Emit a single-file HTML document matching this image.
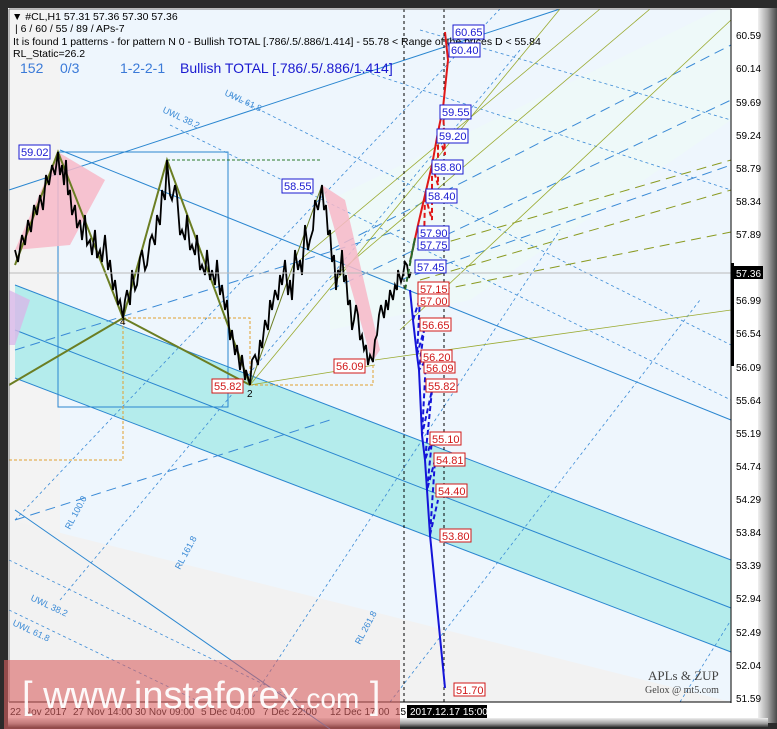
<!DOCTYPE html>
<html><head><meta charset="utf-8"><style>
html,body{margin:0;padding:0;background:#2b2b2b;}
svg{display:block;font-family:"Liberation Sans",sans-serif;}
.ax{font-size:10px;fill:#000;}
.bl{font-size:11px;fill:#1a1ad0;}
.rd{font-size:11px;fill:#d01818;}
</style></head><body>
<svg width="777" height="729" viewBox="0 0 777 729" xmlns="http://www.w3.org/2000/svg">
<defs>
<linearGradient id="bz" x1="0" x2="1"><stop offset="0" stop-color="#f0f0f0"/><stop offset="0.5" stop-color="#a8a8a8"/><stop offset="1" stop-color="#4a4a4a"/></linearGradient>
<linearGradient id="bb" x1="0" y1="0" x2="0" y2="1"><stop offset="0" stop-color="#eeeeee"/><stop offset="0.6" stop-color="#a0a0a0"/><stop offset="1" stop-color="#3a3a3a"/></linearGradient>
</defs>
<rect width="777" height="729" fill="#2b2b2b"/>
<rect x="8" y="8" width="752" height="712" fill="#ffffff"/>
<rect x="758" y="8" width="19" height="715" fill="url(#bz)"/>
<rect x="8" y="718" width="760" height="9" fill="url(#bb)"/>
<rect x="9" y="9" width="722" height="693" fill="#f3f3f3"/>
<polygon points="60,9 731,9 731,702 60,702" fill="#eef6fd"/>
<polygon points="9,520 731,702 9,702" fill="#f2f2f2"/>
<polygon points="330,200 720,9 731,9 731,120 470,300 330,330" fill="#eefaf8" opacity="0.8"/>
<polygon points="15,285 731,560 731,652 15,378" fill="#b4ecec"/>
<line x1="15" y1="285" x2="731" y2="560" stroke="#2a86d0" stroke-width="1"/>
<line x1="15" y1="330" x2="731" y2="608" stroke="#2a86d0" stroke-width="1"/>
<line x1="15" y1="378" x2="731" y2="652" stroke="#2a86d0" stroke-width="1"/>
<line x1="60" y1="150" x2="731" y2="420" stroke="#2a86d0" stroke-width="1"/>
<line x1="15" y1="510" x2="330" y2="729" stroke="#2a86d0" stroke-width="1"/>
<line x1="9" y1="190" x2="560" y2="9" stroke="#2a86d0" stroke-width="1"/>
<g stroke="#3a8ad6" stroke-width="0.8" stroke-dasharray="3,3" fill="none">
<line x1="230" y1="95" x2="731" y2="345"/><line x1="170" y1="125" x2="731" y2="400"/>
<line x1="360" y1="70" x2="731" y2="190"/><line x1="420" y1="30" x2="731" y2="120"/>
<line x1="15" y1="520" x2="500" y2="9"/><line x1="60" y1="600" x2="520" y2="50"/>
<line x1="250" y1="702" x2="560" y2="230"/><line x1="390" y1="702" x2="700" y2="300"/>
<line x1="680" y1="702" x2="731" y2="620"/><line x1="9" y1="610" x2="200" y2="702"/>
<line x1="9" y1="560" x2="300" y2="702"/>
</g>
<g stroke="#3a8ad6" stroke-width="1" stroke-dasharray="10,6" fill="none">
<line x1="330" y1="250" x2="731" y2="45"/><line x1="330" y1="290" x2="731" y2="100"/>
<line x1="400" y1="280" x2="731" y2="165"/><line x1="15" y1="350" x2="400" y2="230"/>
<line x1="15" y1="520" x2="330" y2="420"/>
</g>
<g stroke="#8a9a20" stroke-width="1" stroke-dasharray="10,6" fill="none">
<line x1="420" y1="250" x2="731" y2="160"/><line x1="420" y1="280" x2="731" y2="190"/>
<line x1="440" y1="290" x2="731" y2="232"/>
</g>
<g stroke="#9aaa30" stroke-width="0.8" fill="none">
<line x1="300" y1="260" x2="600" y2="9"/><line x1="330" y1="280" x2="650" y2="9"/>
<line x1="400" y1="330" x2="731" y2="20"/><line x1="250" y1="385" x2="560" y2="9"/>
<line x1="375" y1="360" x2="731" y2="310"/><line x1="250" y1="385" x2="375" y2="365"/>
</g>
<rect x="58" y="152" width="170" height="255" fill="none" stroke="#2a86d0"/>
<polyline points="123,318 250,318 250,385" fill="none" stroke="#e0a030" stroke-dasharray="3,2"/>
<polyline points="9,460 123,460 123,318" fill="none" stroke="#e0a030" stroke-dasharray="3,2"/>
<polyline points="167,160 322,160" fill="none" stroke="#2a7a2a" stroke-dasharray="3,2"/>
<polyline points="250,385 373,385 373,365" fill="none" stroke="#e0a030" stroke-dasharray="3,2"/>
<polygon points="15,250 58,152 105,180 70,245" fill="#f7b8c8" opacity="0.85"/>
<polygon points="322,185 345,200 380,350 372,362" fill="#f7b8c8" opacity="0.85"/>
<polygon points="9,290 30,300 15,345 9,345" fill="#d8b8e8" opacity="0.8"/>
<polyline points="15,265 58,152 123,318 167,160 250,385" fill="none" stroke="#6b7e23" stroke-width="2"/>
<polyline points="9,385 123,318 250,385" fill="none" stroke="#6b7e23" stroke-width="2"/>
<polyline points="250,385 322,185" fill="none" stroke="#6b7e23" stroke-width="1"/>
<polyline points="15,250 18,262 22,235 25,245 28,220 31,232 34,205 37,215 40,195 43,210 46,175 49,185 52,165 55,175 58,152 60,175 62,165 64,185 66,160 68,195 70,190 72,215 75,205 77,228 80,220 82,240 85,215 87,245 90,240 92,255 95,230 97,258 100,250 102,262 105,235 108,270 110,260 113,290 115,280 118,305 120,300 123,318 125,300 127,290 130,305 132,270 135,290 137,285 140,258 142,250 145,270 147,265 150,240 152,235 155,245 157,215 160,225 162,190 165,200 167,160 170,195 172,200 175,185 177,195 180,235 182,230 185,240 187,215 190,250 192,245 195,255 197,235 200,270 202,265 205,275 207,250 210,280 212,270 215,285 217,260 220,295 222,285 225,310 227,300 230,340 232,330 235,355 237,345 240,370 242,355 245,380 246,370 250,385 252,360 255,355 258,365 260,340 262,348 265,320 268,330 270,300 272,310 275,290 278,300 280,275 282,285 285,260 288,295 290,280 292,300 295,250 298,270 300,260 302,275 305,225 308,250 310,240 313,230 315,200 318,210 322,185 324,210 326,205 328,235 330,230 332,262 334,255 336,290 338,270 340,275 342,250 344,282 346,275 348,305 350,300 352,330 354,320 356,305 358,315 360,340 362,335 364,350 366,345 368,365 370,355 373,362 375,340 377,335 379,315 381,305 384,318 386,300 388,310 390,290 393,300 395,285 397,290 398,270 401,282 403,275 405,262 407,265 409,278 411,272" fill="none" stroke="#000" stroke-width="1.8"/>
<line x1="404" y1="9" x2="404" y2="702" stroke="#000" stroke-dasharray="3,3"/>
<line x1="444" y1="9" x2="444" y2="702" stroke="#000" stroke-dasharray="3,3"/>
<line x1="9" y1="273" x2="731" y2="273" stroke="#bbbbbb"/>
<polyline points="410,262 418,225 425,195 432,165 438,132 443,108 448,60 445,32" fill="none" stroke="#e01818" stroke-width="2"/>
<polyline points="418,225 424,245 425,195 432,220 432,165 438,185 438,132 445,155 443,108" fill="none" stroke="#e01818" stroke-width="2" stroke-dasharray="5,3"/>
<polyline points="410,290 413,320 417,355 419,370 422,435 425,460 427,490 430,535 445,688" fill="none" stroke="#1414d8" stroke-width="2"/>
<polyline points="413,320 420,298 417,355 424,330 419,370 426,360 422,435 432,390 425,460 432,440 427,490 435,460 430,535 438,500" fill="none" stroke="#1414d8" stroke-width="2" stroke-dasharray="5,3"/>
<polyline points="410,262 415,238 405,290" fill="none" stroke="#2a6a2a" stroke-width="2" stroke-dasharray="5,3"/>
<g font-size="10.5" fill="#000">
<text x="12" y="20">▼ #CL,H1  57.31 57.36 57.30 57.36</text>
<text x="15" y="32">| 6 / 60 / 55 / 89 / APs-7</text>
<text x="13" y="45">It is found 1 patterns  -  for pattern N 0 - Bullish TOTAL [.786/.5/.886/1.414] - 55.78 &lt; Range of the prices D &lt; 55.84</text>
<text x="13" y="57">RL_Static=26.2</text>
</g>
<g font-size="14" fill="#3a7ad8"><text x="20" y="73">152</text><text x="60" y="73">0/3</text><text x="120" y="73">1-2-2-1</text></g>
<text x="180" y="73" font-size="14" fill="#1a1ad0">Bullish TOTAL [.786/.5/.886/1.414]</text>
<g font-size="9" fill="#3a8ad6">
<text x="224" y="95" transform="rotate(25 224 95)">UWL 61.8</text>
<text x="162" y="112" transform="rotate(25 162 112)">UWL 38.2</text>
<text x="30" y="600" transform="rotate(25 30 600)">UWL 38.2</text>
<text x="12" y="625" transform="rotate(25 12 625)">UWL 61.8</text>
<text x="70" y="530" transform="rotate(-62 70 530)">RL 100.0</text>
<text x="180" y="570" transform="rotate(-62 180 570)">RL 161.8</text>
<text x="360" y="645" transform="rotate(-62 360 645)">RL 261.8</text>
</g>
<g stroke-width="1" fill="#fff">
<g stroke="#1a1ad0">
<rect x="19" y="145" width="31" height="14"/><rect x="282" y="179" width="31" height="14"/>
<rect x="453" y="25" width="31" height="14"/><rect x="449" y="43" width="31" height="14"/>
<rect x="440" y="105" width="31" height="14"/><rect x="437" y="129" width="31" height="14"/>
<rect x="432" y="160" width="31" height="14"/><rect x="426" y="189" width="31" height="14"/>
<rect x="418" y="226" width="31" height="12"/><rect x="418" y="238" width="31" height="12"/>
<rect x="415" y="260" width="31" height="13"/>
</g>
<g stroke="#d01818">
<rect x="212" y="379" width="31" height="14"/><rect x="334" y="359" width="31" height="14"/>
<rect x="418" y="282" width="31" height="12"/><rect x="418" y="294" width="31" height="12"/>
<rect x="420" y="318" width="31" height="13"/><rect x="421" y="350" width="31" height="12"/>
<rect x="424" y="362" width="31" height="11"/><rect x="426" y="379" width="31" height="13"/>
<rect x="430" y="432" width="31" height="13"/><rect x="434" y="453" width="31" height="13"/>
<rect x="436" y="484" width="31" height="13"/><rect x="440" y="529" width="31" height="13"/>
<rect x="454" y="683" width="31" height="13"/>
</g>
</g>
<g class="bl">
<text x="21" y="156">59.02</text><text x="284" y="190">58.55</text><text x="455" y="36">60.65</text><text x="451" y="54">60.40</text>
<text x="442" y="116">59.55</text><text x="439" y="140">59.20</text><text x="434" y="171">58.80</text><text x="428" y="200">58.40</text>
<text x="420" y="237">57.90</text><text x="420" y="249">57.75</text><text x="417" y="271">57.45</text>
</g>
<g class="rd">
<text x="214" y="390">55.82</text><text x="336" y="370">56.09</text><text x="420" y="293">57.15</text><text x="420" y="305">57.00</text>
<text x="422" y="329">56.65</text><text x="423" y="361">56.20</text><text x="426" y="372">56.09</text><text x="428" y="390">55.82</text>
<text x="432" y="443">55.10</text><text x="436" y="464">54.81</text><text x="438" y="495">54.40</text><text x="442" y="540">53.80</text>
<text x="456" y="694">51.70</text>
</g>
<text x="120" y="325" font-size="10">4</text><text x="247" y="397" font-size="10">2</text>
<text x="648" y="680" font-family="Liberation Serif,serif" font-size="13" fill="#444">APLs &amp; ZUP</text>
<text x="645" y="693" font-family="Liberation Serif,serif" font-size="10" fill="#444">Gelox @ mt5.com</text>
<line x1="731" y1="9" x2="731" y2="703" stroke="#000"/>
<line x1="9" y1="702" x2="731" y2="702" stroke="#000"/>
<line x1="9" y1="9" x2="731" y2="9" stroke="#777"/>
<line x1="9" y1="9" x2="9" y2="702" stroke="#777"/>
<rect x="731" y="263" width="3" height="103" fill="#000"/>
<g class="ax">
<text x="736" y="39">60.59</text><text x="736" y="72">60.14</text><text x="736" y="106">59.69</text><text x="736" y="139">59.24</text>
<text x="736" y="172">58.79</text><text x="736" y="205">58.34</text><text x="736" y="238">57.89</text><text x="736" y="304">56.99</text>
<text x="736" y="337">56.54</text><text x="736" y="371">56.09</text><text x="736" y="404">55.64</text><text x="736" y="437">55.19</text>
<text x="736" y="470">54.74</text><text x="736" y="503">54.29</text><text x="736" y="536">53.84</text><text x="736" y="569">53.39</text>
<text x="736" y="602">52.94</text><text x="736" y="636">52.49</text><text x="736" y="669">52.04</text><text x="736" y="702">51.59</text>
</g>
<rect x="733" y="266" width="30" height="13" fill="#000"/>
<text x="736" y="277" class="ax" style="fill:#fff">57.36</text>
<g class="ax">
<text x="10" y="715">22 Nov 2017</text><text x="73" y="715">27 Nov 14:00</text><text x="135" y="715">30 Nov 09:00</text>
<text x="201" y="715">5 Dec 04:00</text><text x="263" y="715">7 Dec 22:00</text><text x="330" y="715">12 Dec 17:00</text><text x="395" y="715">15</text>
</g>
<rect x="407" y="705" width="80" height="13" fill="#000"/>
<text x="410" y="715" class="ax" style="fill:#fff">2017.12.17 15:00</text>
<rect x="4" y="660" width="396" height="69" fill="#d86060" opacity="0.6"/>
<text x="22" y="708" font-size="38" fill="#fff" opacity="0.95">[ www.instaforex<tspan font-size="28">.com</tspan> ]</text>
</svg>
</body></html>
